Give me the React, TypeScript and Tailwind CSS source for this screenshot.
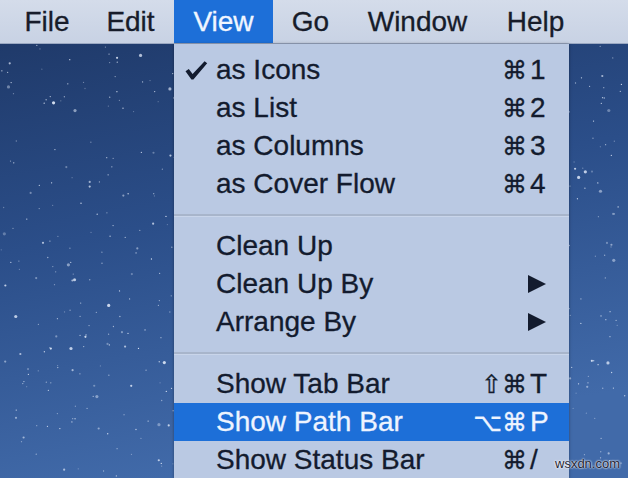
import React from "react";

const FONT = '"Liberation Sans", "DejaVu Sans", Arial, sans-serif';

function Stars() {
  const dots: { x: number; y: number; r: number; o: number }[] = [];
  let s = 12345;
  const rnd = () => {
    s = (s * 1103515245 + 12345) % 2147483648;
    return s / 2147483648;
  };
  for (let i = 0; i < 750; i++) {
    const x = rnd() * 628;
    const y = 44 + rnd() * 434;
    const big = rnd();
    const r = big > 0.95 ? 1.6 : big > 0.8 ? 1.1 : 0.65;
    const o = 0.3 + rnd() * 0.6;
    dots.push({ x, y, r, o });
  }
  return (
    <svg className="absolute inset-0" width="628" height="478" viewBox="0 0 628 478">
      <defs>
        <linearGradient id="bg" x1="0" y1="0" x2="0.25" y2="1">
          <stop offset="0" stopColor="#1d3664" />
          <stop offset="0.5" stopColor="#2b4e89" />
          <stop offset="1" stopColor="#416aa9" />
        </linearGradient>
      </defs>
      <rect x="0" y="0" width="628" height="478" fill="url(#bg)" />
      {dots.map((d, i) => (
        <circle key={i} cx={d.x} cy={d.y} r={d.r} fill="#e6eefc" opacity={d.o} />
      ))}
    </svg>
  );
}

function Check() {
  return (
    <svg width="23" height="19" viewBox="0 0 23 19">
      <path
        d="M0.5 10.2 L3.8 8.1 L7.6 13.0 L19.6 0.3 L22.2 2.2 L8.4 18.6 L6.4 18.6 Z"
        fill="#131b2e"
      />
    </svg>
  );
}

function Arrow() {
  return (
    <svg width="18" height="18" viewBox="0 0 18 18">
      <path d="M0 0 L18 9 L0 18 Z" fill="#131b2e" />
    </svg>
  );
}

type Item = {
  label: string;
  check?: boolean;
  mods?: string;
  k?: string;
  arrow?: boolean;
  active?: boolean;
};

function Row({ it }: { it: Item }) {
  const txt = it.active ? "text-[#eef4ff]" : "text-[#131b2e]";
  return (
    <div
      className={`flex h-[38px] items-center ${it.active ? "bg-[#1d6fd8]" : ""} ${txt}`}
    >
      <div className="flex w-[42px] items-center pl-[11px]">{it.check ? <Check /> : null}</div>
      <div className="flex-1 text-[28px] leading-none">{it.label}</div>
      <div className="w-[80px] text-right text-[25px] leading-none">{it.mods ?? ""}</div>
      {it.arrow ? (
        <div className="flex w-[24px] items-center pl-[1px]">
          <Arrow />
        </div>
      ) : (
        <div className="flex w-[24px] items-center pl-[3px] text-[28px] leading-none">
          {it.k ?? ""}
        </div>
      )}
      <div className="w-[18px]" />
    </div>
  );
}

function Sep() {
  return (
    <div className="flex h-[24px] flex-col justify-center">
      <div className="h-[2px] bg-[#a8b5cb]" />
      <div className="h-[1px] bg-[#c9d5ea]" />
    </div>
  );
}

export default function App() {
  const menus = [
    { n: "File", w: 80 },
    { n: "Edit", w: 87 },
    { n: "View", w: 99, a: true },
    { n: "Go", w: 75 },
    { n: "Window", w: 139 },
    { n: "Help", w: 97 },
  ];
  const g1: Item[] = [
    { label: "as Icons", check: true, mods: "⌘", k: "1" },
    { label: "as List", mods: "⌘", k: "2" },
    { label: "as Columns", mods: "⌘", k: "3" },
    { label: "as Cover Flow", mods: "⌘", k: "4" },
  ];
  const g2: Item[] = [
    { label: "Clean Up" },
    { label: "Clean Up By", arrow: true },
    { label: "Arrange By", arrow: true },
  ];
  const g3: Item[] = [
    { label: "Show Tab Bar", mods: "⇧⌘", k: "T" },
    { label: "Show Path Bar", mods: "⌥⌘", k: "P", active: true },
    { label: "Show Status Bar", mods: "⌘", k: "/" },
  ];
  return (
    <div
      className="relative h-[478px] w-[628px] overflow-hidden [-webkit-text-stroke:0.3px]"
      style={{ fontFamily: FONT }}
    >
      <Stars />
      <div className="relative flex h-[44px] bg-gradient-to-b from-[#d4dcea] to-[#c8d2e4] pl-[7px] border-b border-[#9aa8c2]">
        {menus.map((m) => (
          <div
            key={m.n}
            className={`flex h-full items-center justify-center text-[28px] leading-none ${
              m.a ? "bg-[#1d6fd8] text-[#f0f6ff]" : "text-[#171c2a]"
            }`}
            style={{ width: m.w }}
          >
            {m.n}
          </div>
        ))}
      </div>
      <div className="absolute left-[174px] top-[44px] w-[395px] bg-[#bac9e3] pt-[7px] shadow-[0_0_3px_rgba(0,0,0,0.35)]">
        {g1.map((it) => (
          <Row key={it.label} it={it} />
        ))}
        <Sep />
        {g2.map((it) => (
          <Row key={it.label} it={it} />
        ))}
        <Sep />
        {g3.map((it) => (
          <Row key={it.label} it={it} />
        ))}
      </div>
      <div
        className="absolute left-[555px] top-[457px] text-[13px] leading-none text-[#1e2433] [-webkit-text-stroke:0px]"
        style={{ textShadow: "0 0 2px #ffffff, 0 0 2px #ffffff" }}
      >
        wsxdn.com
      </div>
    </div>
  );
}
